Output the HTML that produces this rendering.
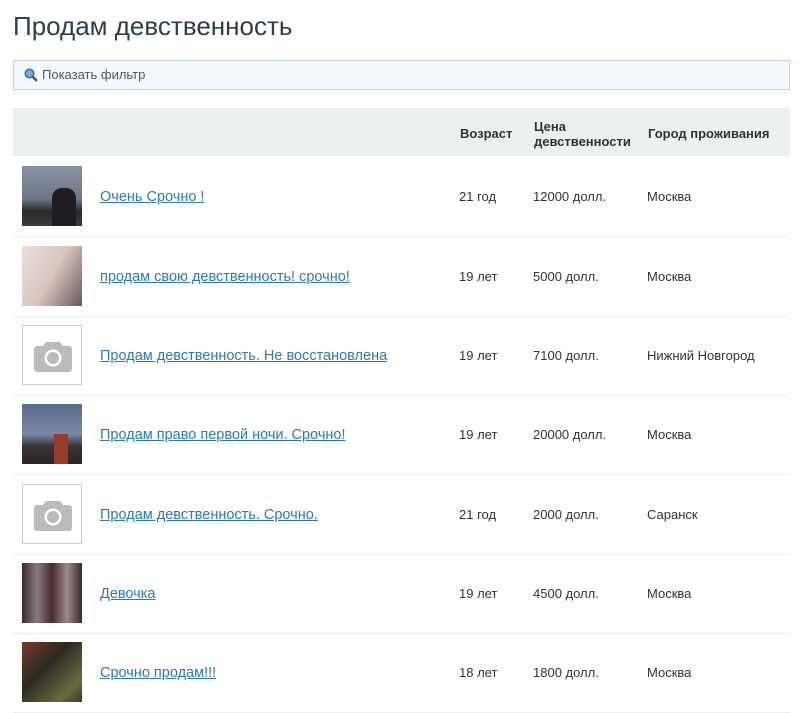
<!DOCTYPE html>
<html><head><meta charset="utf-8"><style>
body{margin:0;background:#fff;font-family:"Liberation Sans","DejaVu Sans",sans-serif;color:#333;width:800px;height:707px;overflow:hidden;position:relative}
h1{position:absolute;left:13px;top:11px;margin:0;font-weight:normal;font-size:26px;color:#2c3e50;letter-spacing:0}
.filter{position:absolute;left:13px;top:60px;width:775px;height:28px;border:1px solid #b9d4f0;background:#f4f8fc;font-size:13px;color:#555;line-height:28px}
.filter span{position:absolute;left:28px}
.head{position:absolute;left:13px;top:108px;width:777px;height:48px;background:#ecf0f1;font-size:13px;font-weight:bold;color:#333}
.head div{position:absolute}
.row{position:absolute;left:13px;width:777px;height:79px;border-bottom:1px solid #eceff0;font-size:13px}
.row .th{position:absolute;left:9px;top:9px;width:60px;height:60px}
.row a{position:absolute;left:87px;top:32px;font-size:14.5px;color:#2a7ab8;text-decoration:underline}
.row .a{position:absolute;left:446px;top:32px}
.row .p{position:absolute;left:520px;top:32px}
.row .c{position:absolute;left:634px;top:32px}
.ph{border:1px solid #ccc;box-sizing:border-box;background:#fff}
</style></head><body>
<h1>Продам девственность</h1>
<div class="filter"><svg style="position:absolute;left:10px;top:7px" width="14" height="14" viewBox="0 0 14 14"><circle cx="5.5" cy="5.5" r="4.3" fill="#6ab0e8" stroke="#3a6e9c" stroke-width="1.5"/><path d="M8.5 8.5L13 13" stroke="#555" stroke-width="2.5"/></svg><span>Показать фильтр</span></div>
<div class="head"><div style="left:447px;top:18px">Возраст</div><div style="left:521px;top:11px;line-height:15px">Цена<br>девственности</div><div style="left:635px;top:18px">Город проживания</div></div>

<div class="row" style="top:157px"><div class="th" style="background:linear-gradient(#8a93a6 0%,#6d7587 55%,#2c2a2c 75%,#3a3a3a 100%)"><div style="position:absolute;left:30px;top:22px;width:24px;height:38px;background:#1f1d22;border-radius:10px 10px 0 0"></div></div><a>Очень Срочно !</a><div class="a">21 год</div><div class="p">12000 долл.</div><div class="c">Москва</div></div>

<div class="row" style="top:237px"><div class="th" style="background:linear-gradient(120deg,#e8e0de 0%,#d9c4bf 50%,#6a5a57 100%)"></div><a>продам свою девственность! срочно!</a><div class="a">19 лет</div><div class="p">5000 долл.</div><div class="c">Москва</div></div>

<div class="row" style="top:316px"><div class="th ph"><svg style="position:absolute;left:11px;top:13px" width="38" height="33" viewBox="0 0 38 33"><path d="M12 3h14l3 4h6a3 3 0 0 1 3 3v20a3 3 0 0 1-3 3H3a3 3 0 0 1-3-3V10a3 3 0 0 1 3-3h6z" fill="#bbb"/><circle cx="19" cy="19" r="8.5" fill="#fff"/><circle cx="19" cy="19" r="6" fill="#bbb"/></svg></div><a>Продам девственность. Не восстановлена</a><div class="a">19 лет</div><div class="p">7100 долл.</div><div class="c">Нижний Новгород</div></div>

<div class="row" style="top:395px"><div class="th" style="background:linear-gradient(#5a6a8c 0%,#7b88a6 50%,#3a3436 70%,#2a2426 100%)"><div style="position:absolute;left:32px;top:30px;width:14px;height:30px;background:#9a3a2a"></div></div><a>Продам право первой ночи. Срочно!</a><div class="a">19 лет</div><div class="p">20000 долл.</div><div class="c">Москва</div></div>

<div class="row" style="top:475px"><div class="th ph"><svg style="position:absolute;left:11px;top:13px" width="38" height="33" viewBox="0 0 38 33"><path d="M12 3h14l3 4h6a3 3 0 0 1 3 3v20a3 3 0 0 1-3 3H3a3 3 0 0 1-3-3V10a3 3 0 0 1 3-3h6z" fill="#bbb"/><circle cx="19" cy="19" r="8.5" fill="#fff"/><circle cx="19" cy="19" r="6" fill="#bbb"/></svg></div><a>Продам девственность. Срочно.</a><div class="a">21 год</div><div class="p">2000 долл.</div><div class="c">Саранск</div></div>

<div class="row" style="top:554px"><div class="th" style="background:linear-gradient(90deg,#3a2a30 0%,#8a7a80 25%,#4a2a30 50%,#9a8a8a 75%,#3a2a30 100%)"></div><a>Девочка</a><div class="a">19 лет</div><div class="p">4500 долл.</div><div class="c">Москва</div></div>

<div class="row" style="top:633px"><div class="th" style="background:linear-gradient(135deg,#7a3a2a 0%,#2a2a20 40%,#6a6a40 80%,#3a3a2a 100%)"></div><a>Срочно продам!!!</a><div class="a">18 лет</div><div class="p">1800 долл.</div><div class="c">Москва</div></div>
</body></html>
